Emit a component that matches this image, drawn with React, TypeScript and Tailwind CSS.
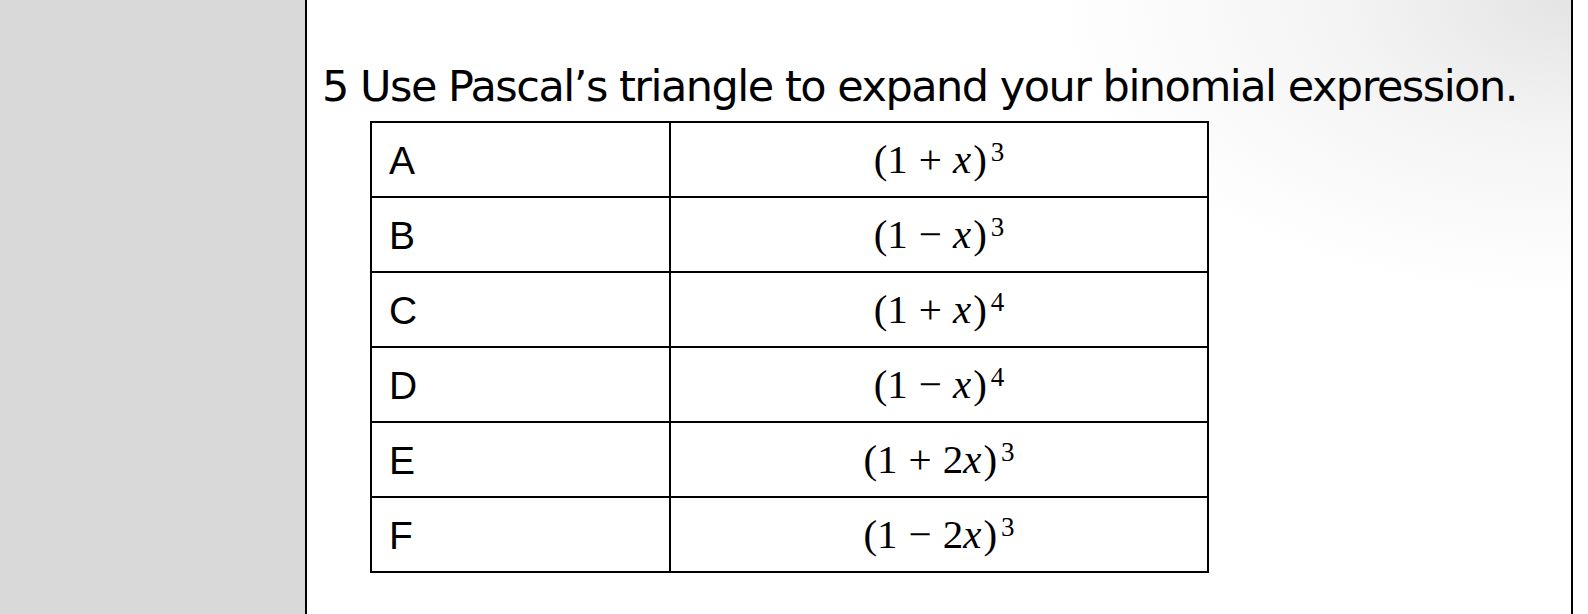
import React from 'react';

const rows = [
  { label: 'A', sign: '+', coef: '', pow: '3' },
  { label: 'B', sign: '−', coef: '', pow: '3' },
  { label: 'C', sign: '+', coef: '', pow: '4' },
  { label: 'D', sign: '−', coef: '', pow: '4' },
  { label: 'E', sign: '+', coef: '2', pow: '3' },
  { label: 'F', sign: '−', coef: '2', pow: '3' },
];

function Expr({ sign, coef, pow }: { sign: string; coef: string; pow: string }) {
  return (
    <span className="font-['Liberation_Serif',serif] text-[41px] text-black whitespace-nowrap">
      (1<span className="mx-[11px]">{sign}</span>
      {coef}
      <i className="pr-[2px]">x</i>)<sup className="ml-[4px] text-[27px] relative -top-[12px]">{pow}</sup>
    </span>
  );
}

export default function App() {
  return (
    <div className="flex h-[614px] w-[1588px] overflow-hidden bg-white">
      {/* left gray strip */}
      <div className="w-[305px] shrink-0 bg-[#d9d9d9]" />

      {/* slide */}
      <div className="w-[1268px] shrink-0 border-x-2 border-black bg-[radial-gradient(ellipse_520px_300px_at_100%_0%,#e4e4e4_0%,#f4f4f4_45%,#ffffff_100%)]">
        <h1 className="mt-[60px] pl-[15px] font-['DejaVu_Sans',Verdana,sans-serif] text-[43px] leading-[52px] tracking-[-1.5px] text-black whitespace-nowrap">
          5 Use Pascal’s triangle to expand your binomial expression.
        </h1>

        <table className="mt-[9px] ml-[63px] w-[839px] border-collapse border-2 border-black bg-white">
          <tbody>
            {rows.map((r) => (
              <tr key={r.label} className="h-[75px]">
                <td className="w-[299px] border-2 border-black pl-[17px] pt-[4px] align-middle font-['Liberation_Sans',Arial,sans-serif] text-[39px] text-black">
                  {r.label}
                </td>
                <td className="border-2 border-black text-center align-middle">
                  <Expr sign={r.sign} coef={r.coef} pow={r.pow} />
                </td>
              </tr>
            ))}
          </tbody>
        </table>
      </div>

      <div className="flex-1 bg-white" />
    </div>
  );
}
